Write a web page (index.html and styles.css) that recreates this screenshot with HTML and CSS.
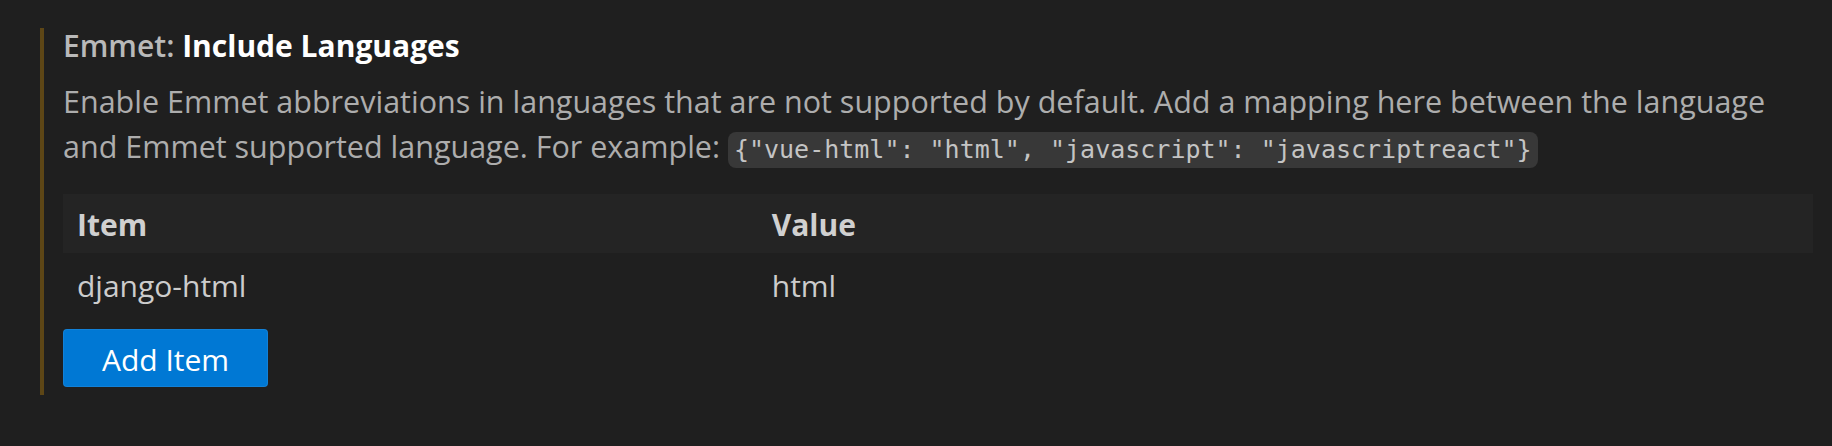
FILE: index.html
```html
<!DOCTYPE html>
<html lang="en">
<head>
<meta charset="utf-8">
<title>Emmet: Include Languages</title>
<link rel="stylesheet" href="styles.css">
</head>
<body>
<div class="setting">
  <div class="title"><span class="category">Emmet: </span><span class="label">Include Languages</span></div>
  <div class="description">Enable Emmet abbreviations in languages that are not supported by default. Add a mapping here between the language and Emmet supported language. For example: <code>{"vue-html": "html", "javascript": "javascriptreact"}</code></div>
  <div class="table">
    <div class="row head">
      <div class="cell">Item</div>
      <div class="cell">Value</div>
    </div>
    <div class="row">
      <div class="cell">django-html</div>
      <div class="cell">html</div>
    </div>
  </div>
  <button class="add">Add Item</button>
</div>
</body>
</html>
```

FILE: styles.css
```css
html, body {
  margin: 0;
  padding: 0;
  background: #1f1f1f;
}

body {
  font-family: "Open Sans", "Noto Sans", sans-serif;
  font-size: 30px;
  color: #cccccc;
  padding: 28px 19px 0 40px;
}

.setting {
  border-left: 4px solid #5d4616;
  padding: 0 0 8px 19px;
}

.title {
  line-height: 36px;
}

.category {
  font-weight: 600;
  color: #b9b9b9;
}

.label {
  font-weight: 700;
  color: #ffffff;
}

.description {
  margin-top: 15px;
  padding-right: 16px;
  font-size: 30.5px;
  line-height: 45px;
  color: #adadad;
}

code {
  font-family: "DejaVu Sans Mono", "Liberation Mono", monospace;
  font-size: 25px;
  line-height: 1;
  color: #c4c4c4;
  background: #383838;
  padding: 3px 6px 4px;
  border-radius: 8px;
}

.table {
  margin-top: 25px;
}

.row {
  display: grid;
  grid-template-columns: 39.7% 1fr;
  padding: 5px 0 0;
  line-height: 56px;
  color: #cccccc;
}

.row.head {
  padding-top: 3px;
  background: #242424;
  font-weight: 700;
  color: #d0d0d0;
}

.cell {
  padding-left: 14px;
}

.add {
  display: block;
  margin-top: 15px;
  width: 205px;
  padding: 3px 0 0;
  line-height: 53px;
  font-family: inherit;
  font-size: 30px;
  color: #ffffff;
  background: #0078d4;
  border: 1px solid rgba(255, 255, 255, 0.07);
  border-radius: 4px;
  text-align: center;
}
```
